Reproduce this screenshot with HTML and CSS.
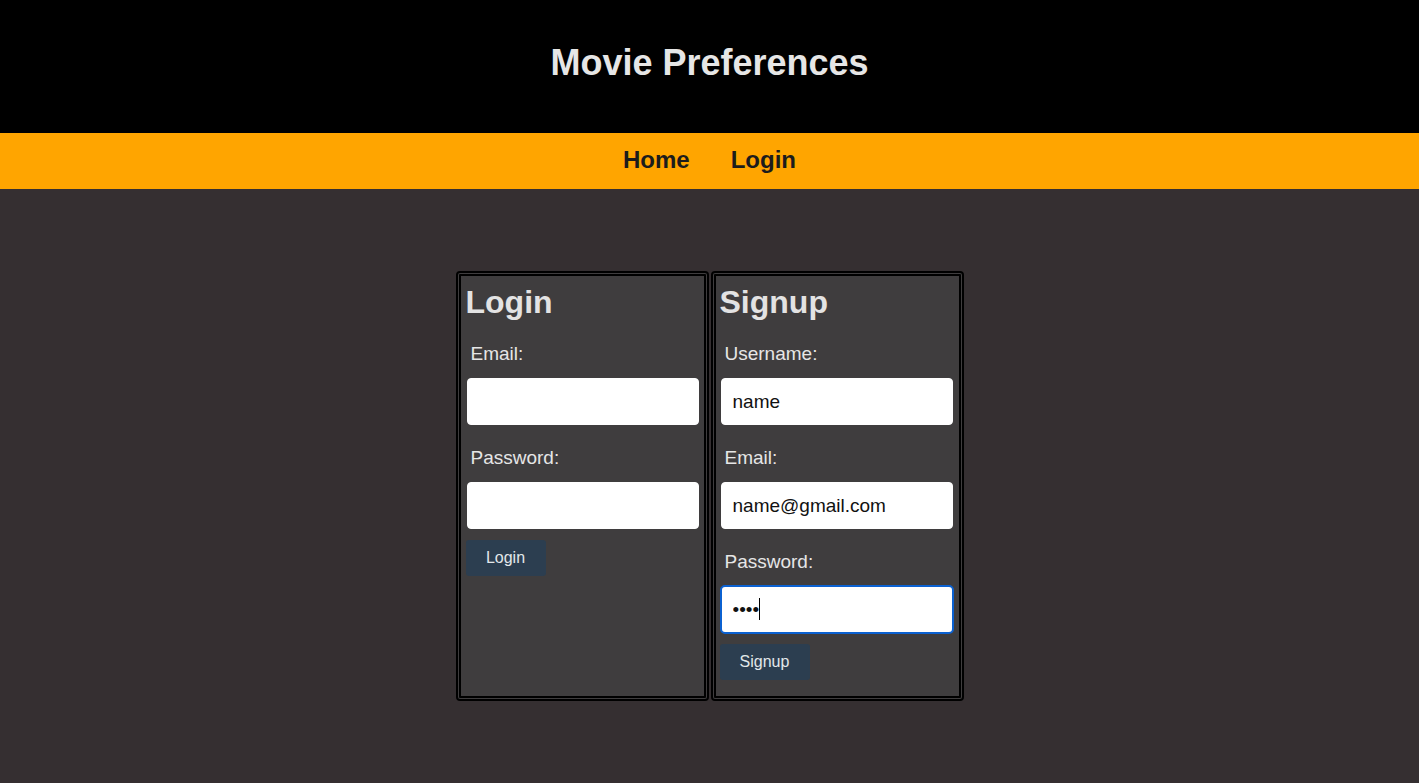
FILE: index.html
```html
<!DOCTYPE html>
<html lang="en">
<head>
<meta charset="utf-8">
<title>Movie Preferences</title>
<link rel="stylesheet" href="styles.css">
</head>
<body>
<header class="site-header">
  <h1 class="site-title">Movie Preferences</h1>
</header>
<nav class="site-nav">
  <a href="#" class="nav-link">Home</a>
  <a href="#" class="nav-link">Login</a>
</nav>
<main class="main">
  <div class="forms">
    <section class="card">
      <h2 class="card-title">Login</h2>
      <label class="field-label">Email:</label>
      <input class="field-input" type="text" value="">
      <label class="field-label">Password:</label>
      <input class="field-input" type="password" value="">
      <button class="btn">Login</button>
    </section>
    <section class="card card-signup">
      <h2 class="card-title">Signup</h2>
      <label class="field-label">Username:</label>
      <input class="field-input" type="text" value="name">
      <label class="field-label">Email:</label>
      <input class="field-input" type="text" value="name@gmail.com">
      <label class="field-label">Password:</label>
      <div class="input-wrap">
        <input class="field-input focused" type="password" value="abcd">
        <span class="caret"></span>
      </div>
      <button class="btn btn-signup">Signup</button>
    </section>
  </div>
</main>
</body>
</html>
```
FILE: styles.css
```css
* { box-sizing: border-box; }
html, body { margin: 0; padding: 0; }
body {
  background: #352f31;
  font-family: "Liberation Sans", Arial, sans-serif;
  min-height: 783px;
}
.site-header {
  background: #000;
  height: 133px;
  padding-top: 42px;
}
.site-title {
  margin: 0;
  text-align: center;
  color: #e6e6e6;
  font-size: 36px;
  font-weight: bold;
  line-height: 41px;
}
.site-nav {
  background: #ffa500;
  height: 56px;
  display: flex;
  justify-content: center;
  gap: 41px;
  padding-top: 13px;
}
.nav-link {
  color: #1c1c1c;
  text-decoration: none;
  font-weight: bold;
  font-size: 24px;
  line-height: 28px;
}
.main {
  padding-top: 82px;
  display: flex;
  justify-content: center;
}
.forms {
  display: flex;
  gap: 2px;
  align-items: stretch;
}
.card {
  width: 253px;
  background: #3f3d3e;
  border: 5px double #000;
  border-radius: 4px;
  padding: 8px 5px 16px 5px;
  display: flex;
  flex-direction: column;
  align-items: flex-start;
}
.card-signup { padding-left: 4px; padding-right: 6px; }
.card-title {
  margin: 0;
  color: #e3e3e3;
  font-size: 32px;
  font-weight: bold;
  line-height: 37px;
}
.field-label {
  display: block;
  color: #e6e6e6;
  font-size: 19px;
  line-height: 22px;
  margin: 22px 0 13px 5px;
}
.field-input {
  display: block;
  width: 232px;
  height: 47px;
  margin-left: 1px;
  border: 1px solid #fff;
  border-radius: 4px;
  background: #fff;
  padding: 0 11px;
  font-family: "Liberation Sans", Arial, sans-serif;
  font-size: 19px;
  color: #111;
}
.input-wrap {
  position: relative;
}
.focused {
  outline: 2px solid #0b61d1;
  outline-offset: -1px;
}
.caret {
  position: absolute;
  left: 39px;
  top: 12px;
  width: 1px;
  height: 22px;
  background: #000;
}
.btn {
  margin-top: 11px;
  height: 36px;
  width: 80px;
  background: #2c3e50;
  color: #e3e8ea;
  border: none;
  border-radius: 3px;
  font-family: "Liberation Sans", Arial, sans-serif;
  font-size: 16px;
  cursor: pointer;
}
.btn-signup { width: 90px; }
```
